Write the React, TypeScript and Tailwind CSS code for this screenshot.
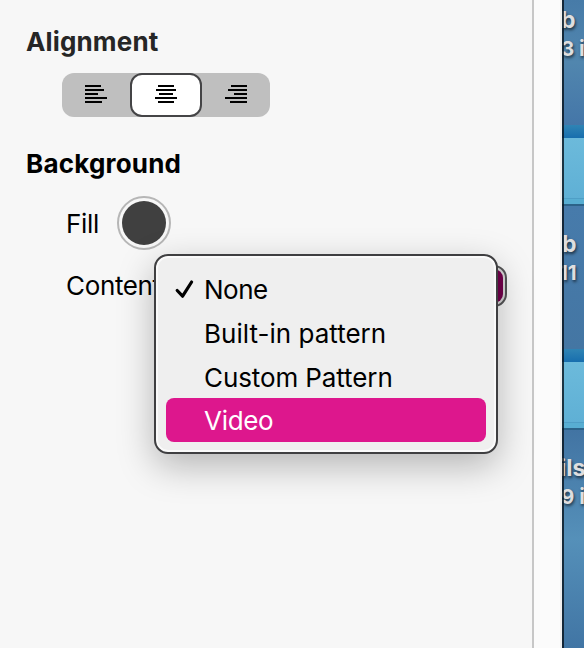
import clsx from "clsx";

type Align = "left" | "center" | "right";

const alignLines: Record<Align, number[][]> = {
  left: [[0, 16], [0, 19], [0, 13], [0, 22], [0, 17]],
  center: [[3, 16], [1, 20], [4, 14], [0, 22], [3, 16]],
  right: [[6, 16], [3, 19], [9, 13], [0, 22], [5, 17]],
};

const AlignIcon = ({ type }: { type: Align }) => (
  <svg className="mb-0.5" width="22" height="18" viewBox="0 0 22 18" shapeRendering="crispEdges">
    {alignLines[type].map(([x, w], i) => (
      <rect key={i} x={x} y={i * 4} width={w} height="2" fill="black" />
    ))}
  </svg>
);

const menuItems = [
  { label: "None", checked: true, tracking: "tracking-[-0.5px]" },
  { label: "Built-in pattern", tracking: "tracking-[0.02px]" },
  { label: "Custom Pattern", tracking: "tracking-[-0.1px]" },
  { label: "Video", active: true, tracking: "tracking-[-0.3px]" },
];

const Menu = () => (
  <div className="absolute left-[154px] top-[254px] w-[344px] h-[200px] rounded-[14px] border-2 border-[#3f3f41] bg-[#efefef] px-2.5 pt-2.5 shadow-[inset_0_0_0_2px_#fafafa,0_12px_36px_rgba(0,0,0,0.27)] z-10">
    {menuItems.map((item) => (
      <div
        key={item.label}
        className={clsx(
          "flex h-11 items-center rounded-lg pl-2",
          item.active ? "bg-[#dd178d] pt-0.5 text-white" : "pt-1 text-black"
        )}
      >
        <span className="flex w-[30px] shrink-0">
          {item.checked && (
            <svg className="-mt-0.5" width="20" height="20" viewBox="0 0 20 20" fill="none" stroke="black" strokeWidth="3.2" strokeLinecap="round" strokeLinejoin="round">
              <path d="M3.2 11.5L8.6 17.2L17.6 3" />
            </svg>
          )}
        </span>
        <span className={clsx("whitespace-nowrap", item.tracking)}>{item.label}</span>
      </div>
    ))}
  </div>
);

const Folder = () => (
  <div className="h-[81px] shrink-0">
    <div className="h-[13px] bg-gradient-to-b from-[#2f84b4] to-[#176eae]" />
    <div className="h-[60px] bg-gradient-to-b from-[#6cbadb] to-[#5fb0d5]" />
    <div className="h-1.5 border-t border-[#4f9fc6] bg-[#58aed2]" />
    <div className="h-0.5 bg-[#2c6389]" />
  </div>
);

const Caption = ({ name, info, nameClass, infoClass }: { name: string; info: string; nameClass: string; infoClass: string }) => (
  <div className="whitespace-pre font-bold text-[#dededf] [text-shadow:1px_2px_3px_rgba(0,0,0,0.6)]">
    <div className={clsx("h-7 text-[23px] leading-7", nameClass)}>{name}</div>
    <div className={clsx("h-7 pt-px text-[20.5px] leading-7", infoClass)}>{info}</div>
  </div>
);

const Desktop = () => (
  <div className="relative flex h-full w-[22px] shrink-0 flex-col overflow-hidden bg-[#477aa9]">
    <div className="h-[125px] shrink-0 bg-gradient-to-b from-[#477ba8] via-[#5186ae] to-[#4476a8] pt-[6px]">
      <Caption name="b" info="3 i" nameClass="-ml-[1px]" infoClass="-ml-px" />
    </div>
    <Folder />
    <div className="h-[143px] shrink-0 bg-gradient-to-b from-[#477bab] to-[#4476a3] pt-6">
      <Caption name="b" info="11" nameClass="ml-0" infoClass="-ml-[3px]" />
    </div>
    <Folder />
    <div className="flex-1 bg-gradient-to-b from-[#4274a3] via-[#5590b9] to-[#4175a4] pt-6">
      <Caption name="ils" info="9 i" nameClass="-ml-[2px]" infoClass="-ml-[1px]" />
    </div>
    <div className="absolute inset-y-0 left-0 w-0.5 bg-[#07131d]/80" />
  </div>
);

export default function App() {
  return (
    <div className="relative flex h-[648px] w-[584px] overflow-hidden bg-[#f7f7f7] font-['Inter',sans-serif] text-[26px] leading-8 text-black">
      <div className="relative w-[532px] shrink-0 pt-[26px]">
        <h2 className="pl-[26px] font-bold tracking-[0.15px] text-[#262626]">Alignment</h2>
        <div className="ml-[62px] mt-[15px] flex h-11 w-[208px] items-center rounded-xl bg-[#bfbfbf]">
          <button className="flex w-[68px] justify-center"><AlignIcon type="left" /></button>
          <button className="flex h-11 w-[72px] items-center justify-center rounded-xl border-2 border-[#444446] bg-white"><AlignIcon type="center" /></button>
          <button className="flex w-[68px] justify-center"><AlignIcon type="right" /></button>
        </div>
        <h2 className="mt-[31px] pl-[26px] font-bold tracking-[0.2px]">Background</h2>
        <div className="mt-4 flex h-[54px] items-center pl-[66px]">
          <span className="w-[33px] pt-0.5 tracking-[-0.3px]">Fill</span>
          <div className="ml-[18px] flex size-[54px] items-center justify-center rounded-full border-2 border-[#b6b6b6]">
            <div className="size-11 rounded-full bg-[#404040]" />
          </div>
        </div>
        <div className="mt-[15px] flex h-[42px] items-center pl-[66px]">
          <span className="w-[98px] tracking-[-0.35px]">Content</span>
          <div className="ml-[23px] h-[42px] w-[320px] shrink-0 rounded-[13px] border-2 border-[#555557] bg-[#d6d6d6] p-0.5">
            <div className="h-full rounded-[9px] bg-[#73004c]" />
          </div>
        </div>
        <Menu />
      </div>
      <div className="w-[30px] shrink-0 border-l-2 border-r-2 border-l-[#c7c7c7] border-r-[#f0f0f0] bg-[#fbfbfb]" />
      <Desktop />
    </div>
  );
}
